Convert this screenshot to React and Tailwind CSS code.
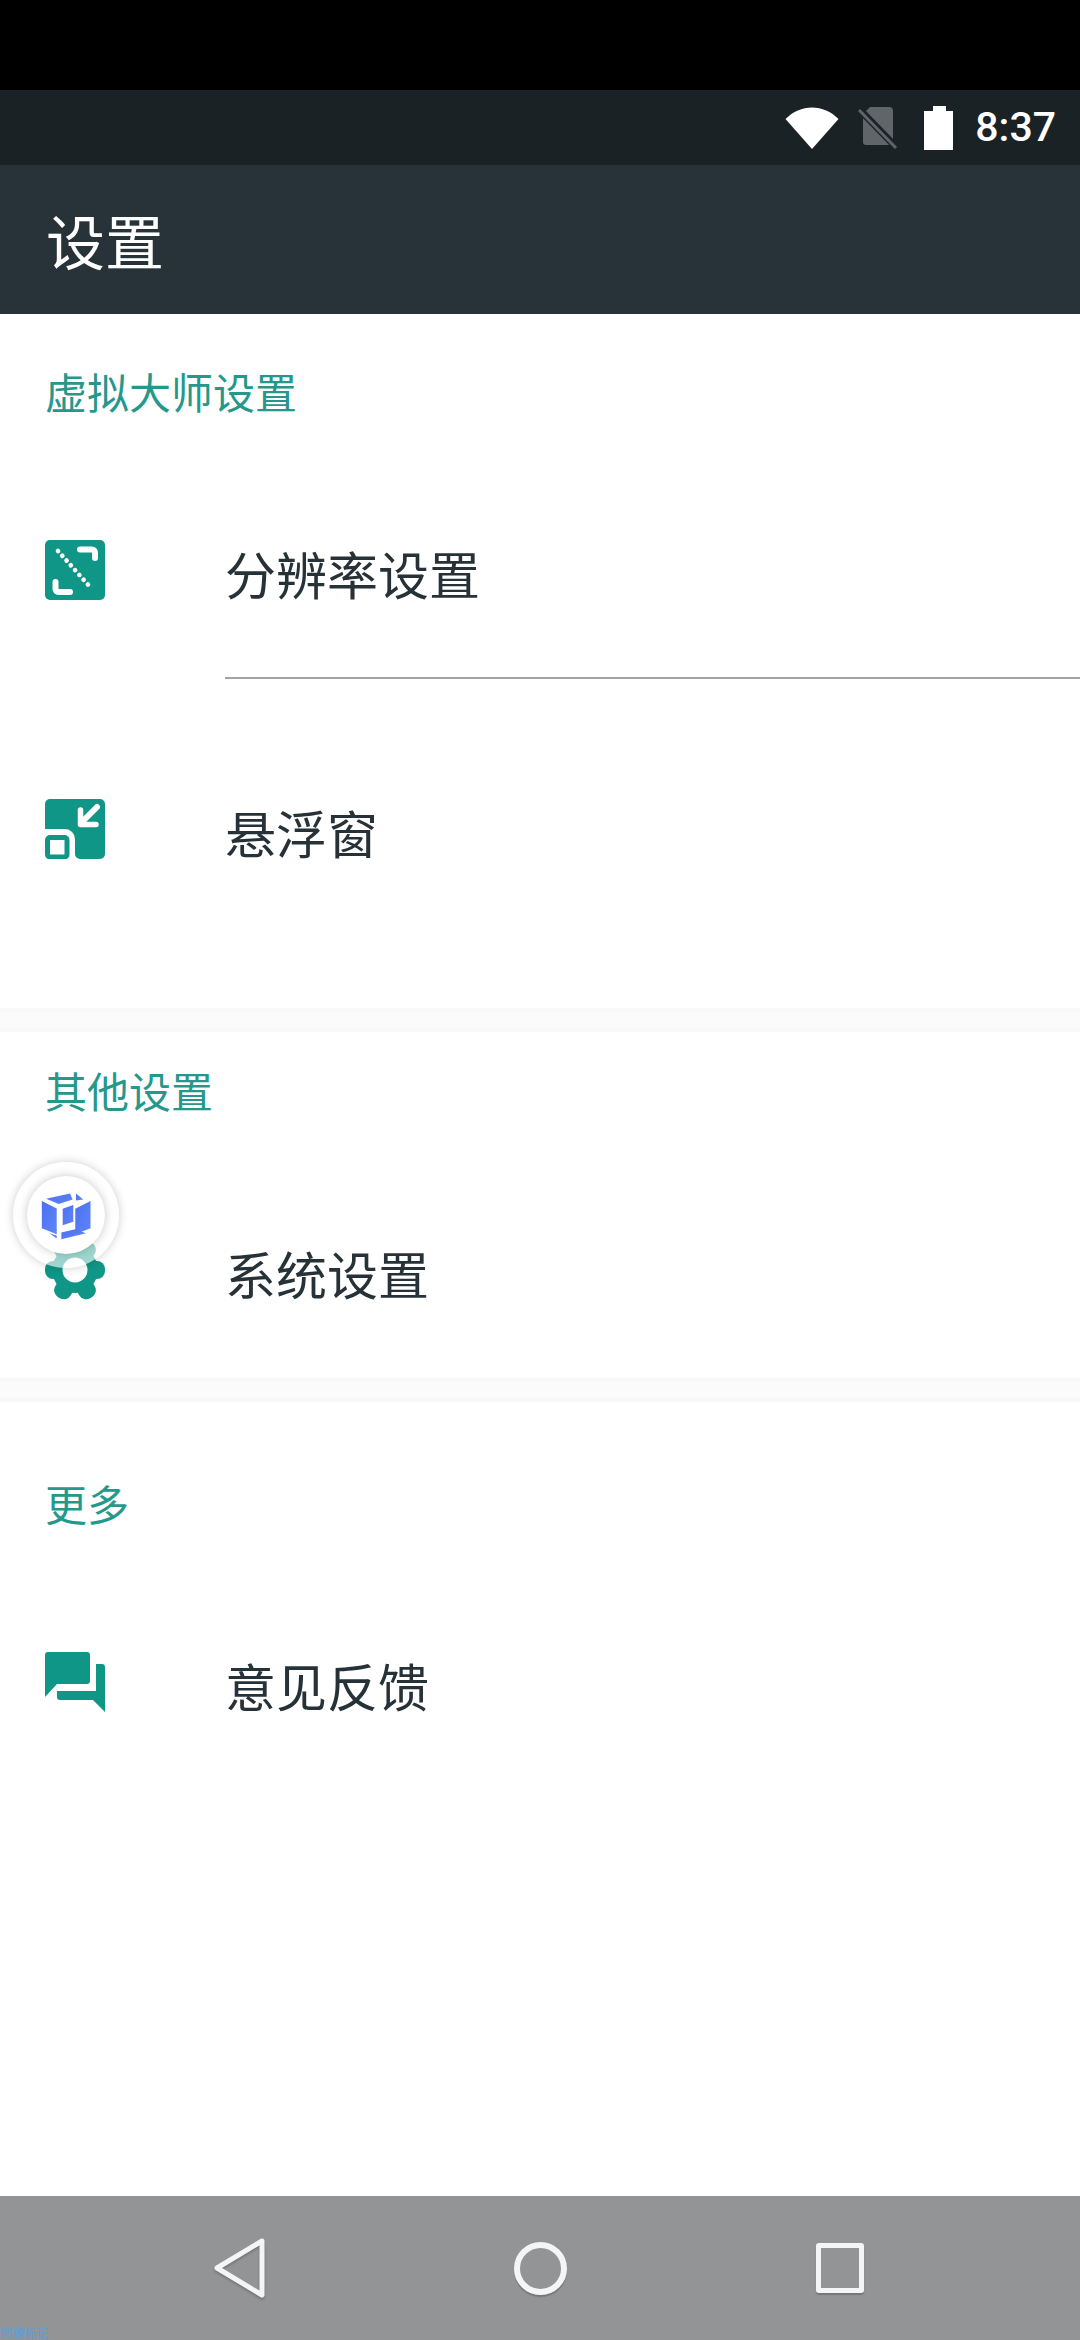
import React from 'react';

const cjk = "font-['Noto_Sans_CJK_SC','Noto_Sans',sans-serif]";

function WifiIcon() {
  return (
    <svg width="54" height="42" viewBox="0 0 54 42">
      <path d="M0.5 12 C15 -3.5 39 -3.5 53.5 12 L27 42 Z" fill="#fff" />
    </svg>
  );
}

function SimOffIcon() {
  return (
    <svg width="40" height="44" viewBox="0 0 40 44">
      <path d="M12 1 H31 a4 4 0 0 1 4 4 V35 L35 39 H8 a3 3 0 0 1 -3 -3 V8 Z" fill="#5f6569" />
      <path d="M1 3 L38 41" stroke="#1a2226" strokeWidth="7" />
      <path d="M1 4 L38 42" stroke="#5f6569" strokeWidth="3" />
    </svg>
  );
}

function BatteryIcon() {
  return (
    <svg width="29" height="44" viewBox="0 0 29 44">
      <path d="M0 5 H9 V0 H22 V5 H29 V44 H0 Z" fill="#fff" />
    </svg>
  );
}

function ResolutionIcon() {
  return (
    <svg width="60" height="60" viewBox="0 0 60 60">
      <rect width="60" height="60" rx="5" fill="#0f9687" />
      <path d="M35 9.5 H47 a3 3 0 0 1 3 3 V18" fill="none" stroke="#fff" strokeWidth="6" strokeLinecap="round" />
      <path d="M10.5 42 V49 a3 3 0 0 0 3 3 H25" fill="none" stroke="#fff" strokeWidth="6" strokeLinecap="round" />
      <path d="M13 11 L47 49" fill="none" stroke="#fff" strokeWidth="4.6" strokeLinecap="round" strokeDasharray="0.1 6.3" />
    </svg>
  );
}

function FloatWindowIcon() {
  return (
    <svg width="60" height="60" viewBox="0 0 60 60">
      <path d="M5 0 H55 a5 5 0 0 1 5 5 V55 a5 5 0 0 1 -5 5 H35 a5 5 0 0 1 -5 -5 V40 a10 10 0 0 0 -10 -10 H0 V5 a5 5 0 0 1 5 -5 Z" fill="#0f9687" />
      <rect x="2.5" y="38.5" width="19.5" height="19.5" rx="2.5" fill="none" stroke="#0f9687" strokeWidth="5" />
      <path d="M52 8 L37 23" stroke="#fff" strokeWidth="6" strokeLinecap="round" />
      <path d="M35.5 11 V25.5 H51" fill="none" stroke="#fff" strokeWidth="5.5" strokeLinecap="round" strokeLinejoin="round" />
    </svg>
  );
}

function GearIcon() {
  return (
    <svg width="60" height="60" viewBox="0 0 60 60">
      <g fill="#0f9687">
        <circle cx="30" cy="30" r="23" />
        <rect x="21" y="-2" width="18" height="64" rx="8" transform="rotate(30 30 30)" />
        <rect x="21" y="0" width="18" height="60" rx="8" transform="rotate(90 30 30)" />
        <rect x="21" y="-2" width="18" height="64" rx="8" transform="rotate(150 30 30)" />
      </g>
      <circle cx="30" cy="30" r="12.5" fill="#fff" />
    </svg>
  );
}

function FeedbackIcon() {
  return (
    <svg width="60" height="60" viewBox="0 0 60 60">
      <path d="M3 0 H42 a3 3 0 0 1 3 3 V29 a3 3 0 0 1 -3 3 H12 L0 45 V3 a3 3 0 0 1 3 -3 Z" fill="#0f9687" />
      <path d="M51 12 H57 a3 3 0 0 1 3 3 V60 L48 48 H15 a3 3 0 0 1 -3 -3 V39 H51 Z" fill="#0f9687" />
    </svg>
  );
}

function Row({ icon, label, className }) {
  return (
    <div className={`flex items-center pl-[45px] ${className}`}>
      <div className="w-[60px] h-[60px] mb-[10px] shrink-0">{icon}</div>
      <div className={`ml-[120px] mb-[3px] text-[51px] leading-none text-[#263238] ${cjk}`}>{label}</div>
    </div>
  );
}

function SectionTitle({ label, className }) {
  return (
    <div className={`flex items-center pl-[45px] pb-[4px] text-[42px] leading-none text-[#26988b] ${cjk} ${className}`}>
      {label}
    </div>
  );
}

function Gap() {
  return <div className="h-[24px] bg-[#fbfbfb] border-y-4 border-[#f8f8f8]" />;
}

// floating ball, sits over the gear icon
function FloatBall() {
  return (
    <div className="absolute left-[13px] top-[1162px] w-[106px] h-[106px] rounded-full bg-white/60 shadow-[0_0_10px_rgba(0,0,0,0.2)] flex items-center justify-center">
      <div className="w-[78px] h-[78px] rounded-full bg-white shadow-[0_0_10px_rgba(0,0,0,0.22)]" />
      <svg className="absolute inset-0" width="106" height="106" viewBox="38 65 320 320">
        <defs>
          <linearGradient id="cube" x1="0" y1="0" x2="1" y2="1">
            <stop offset="0" stopColor="#4f6ff0" />
            <stop offset="1" stopColor="#5c86fb" />
          </linearGradient>
        </defs>
        <g fill="url(#cube)">
          <path d="M138 176 L210 160 L218 178 L176 192 Z" />
          <path d="M228 160 L250 178 L228 181 Z" />
          <path d="M125 183 L170 205 L170 283 L125 265 Z" />
          <path d="M226 206 L272 183 L272 265 L226 283 Z" />
          <path d="M188 206 L220 195 L220 245 L188 256 Z" />
          <path d="M148 280 L170 288 L170 296 Z" />
          <path d="M184 298 L184 278 L226 268 L258 280 Z" />
        </g>
      </svg>
    </div>
  );
}

export default function App() {
  return (
    <div className="relative w-[1080px] h-[2340px] bg-white flex flex-col overflow-hidden">
      <div className="h-[90px] bg-black shrink-0" />

      <div className="h-[75px] bg-[#1a2226] shrink-0 flex items-center justify-end pr-[24px]">
        <WifiIcon />
        <div className="ml-[19px]"><SimOffIcon /></div>
        <div className="ml-[26px]"><BatteryIcon /></div>
        <div className="ml-[22px] text-[41px] leading-none text-white font-medium font-['Roboto',sans-serif]">8:37</div>
      </div>

      <div className="h-[149px] bg-[#283239] shrink-0 flex items-center pl-[46px]">
        <span className={`text-[59px] leading-none text-white ${cjk}`}>设置</span>
      </div>

      <div className="h-[694px] shrink-0 flex flex-col">
        <SectionTitle label="虚拟大师设置" className="h-[158px]" />
        <Row icon={<ResolutionIcon />} label="分辨率设置" className="h-[205px]" />
        <div className="ml-[225px] h-[2px] bg-[#a3a3a3]" />
        <Row icon={<FloatWindowIcon />} label="悬浮窗" className="h-[310px]" />
      </div>
      <Gap />

      <div className="h-[346px] shrink-0 flex flex-col">
        <SectionTitle label="其他设置" className="h-[120px]" />
        <Row icon={<GearIcon />} label="系统设置" className="h-[206px] mt-[20px]" />
      </div>
      <Gap />

      <div className="flex-1 flex flex-col">
        <SectionTitle label="更多" className="h-[206px]" />
        <Row icon={<FeedbackIcon />} label="意见反馈" className="h-[158px]" />
      </div>

      <div className="relative h-[144px] bg-[#939496] shrink-0 grid grid-cols-3 items-center justify-items-center px-[90px]">
        <svg width="56" height="62" viewBox="0 0 56 62" className="drop-shadow-[0_2px_1px_rgba(0,0,0,0.2)]">
          <path d="M50 4 L5 31 L50 58 Z" fill="none" stroke="#f5f5f7" strokeWidth="5" strokeLinejoin="round" />
        </svg>
        <div className="w-[53px] h-[53px] rounded-full border-[6px] border-[#f5f5f7] shadow-[0_2px_1px_rgba(0,0,0,0.2)]" />
        <div className="w-[48px] h-[50px] rounded-[3px] border-[5px] border-[#f5f5f7] shadow-[0_2px_1px_rgba(0,0,0,0.2)]" />
        <span className={`absolute left-0 bottom-[1px] text-[12px] leading-none text-[#5c9fdc] ${cjk}`}>图像标记</span>
      </div>

      <FloatBall />
    </div>
  );
}
